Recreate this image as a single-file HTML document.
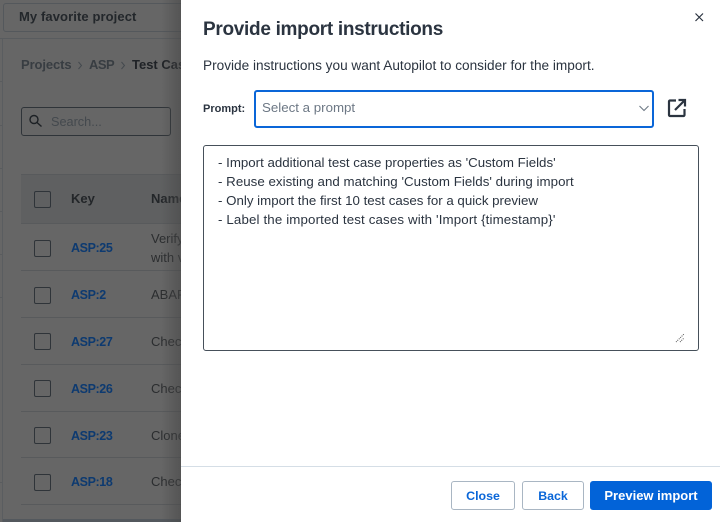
<!DOCTYPE html>
<html><head><meta charset="utf-8"><style>
html,body{margin:0;padding:0;width:720px;height:522px;overflow:hidden;background:#666;font-family:"Liberation Sans","Noto Sans CJK JP",sans-serif}
.t{position:absolute;white-space:nowrap;line-height:20px;height:20px}
.l{position:absolute;background:#585a5c;height:1px}
.s{position:absolute;left:0;width:2px;height:1px;background:#5a5c5e}
.cb{position:absolute;left:34px;width:15px;height:15px;border:1px solid #2f3439;border-radius:2px}
.k{position:absolute;left:71px;font-size:12.5px;letter-spacing:-.4px;font-weight:bold;color:#0d3a70;line-height:20px;white-space:nowrap}
.n{position:absolute;left:151px;font-size:13px;color:#2b2d2f;line-height:20px;white-space:nowrap}
#bg{position:absolute;left:0;top:0;width:181px;height:522px;overflow:hidden;background:#666}
#sh{position:absolute;left:161px;top:0;width:20px;height:522px;background:linear-gradient(to right,rgba(70,70,70,0),rgba(70,70,70,.55))}
#p{position:absolute;left:181px;top:0;width:539px;height:522px;background:#fff}
.btn{position:absolute;top:481px;height:29px;box-sizing:border-box;border-radius:3px;font-size:12.4px;font-weight:bold;text-align:center;line-height:29px}
.li{position:absolute;left:37px;white-space:nowrap;font-size:13.3px;color:#2b3440;line-height:19px}
</style></head><body>
<div id="bg">
<div style="position:absolute;left:3px;top:3px;width:190px;height:27px;border:1px solid #54585c;border-radius:3px"></div>
<div class="t" style="left:19px;top:7px;font-size:13px;font-weight:bold;color:#23272b;letter-spacing:.1px">My favorite project</div>
<div style="position:absolute;left:0;top:38px;width:181px;height:1px;background:#595c5f"></div>
<div style="position:absolute;left:2px;top:39px;width:1px;height:483px;background:#5a5d60"></div>
<div class="s" style="top:81px"></div><div class="s" style="top:125px"></div><div class="s" style="top:168px"></div><div class="s" style="top:211px"></div><div class="s" style="top:254px"></div><div class="s" style="top:297px"></div><div class="s" style="top:482px"></div>
<div class="t" style="left:21px;top:55px;font-size:13px;font-weight:bold;color:#383d42;letter-spacing:-.1px">Projects</div>
<svg style="position:absolute;left:77px;top:61px" width="6" height="9" viewBox="0 0 6 9" fill="none" stroke="#44494e" stroke-width="1"><path d="M1.500 1L4.500 4.500L1.500 8"/></svg>
<div class="t" style="left:89px;top:55px;font-size:13px;font-weight:bold;color:#383d42;letter-spacing:-.5px">ASP</div>
<svg style="position:absolute;left:120px;top:61px" width="6" height="9" viewBox="0 0 6 9" fill="none" stroke="#44494e" stroke-width="1"><path d="M1.500 1L4.500 4.500L1.500 8"/></svg>
<div class="t" style="left:132px;top:55px;font-size:13px;font-weight:bold;color:#1f2226">Test Cases</div>
<div style="position:absolute;left:21px;top:107px;width:148px;height:27px;border:1px solid #2f3439;border-radius:3px"></div>
<svg style="position:absolute;left:27px;top:113px" width="17" height="17" viewBox="0 0 17 17" fill="none" stroke="#1d2125" stroke-width="1.4"><circle cx="7" cy="6.500" r="4"/><path d="M10 9.500L14.500 13.500"/></svg>
<div class="t" style="left:51px;top:112px;font-size:12.700px;color:#44494e">Search...</div>
<div style="position:absolute;left:21px;top:174px;width:160px;height:50px;background:#5f6061"></div>
<div class="l" style="left:21px;top:174px;width:160px"></div>
<div class="cb" style="top:191px"></div>
<div class="k" style="top:189px;color:#232629;font-size:13px;letter-spacing:0">Key</div>
<div class="n" style="top:189px;font-weight:bold;color:#232629">Name</div>
<div class="l" style="left:21px;top:223px;width:160px"></div>
<div class="cb" style="top:240px"></div>
<div class="k" style="top:238px">ASP:25</div>
<div class="n" style="top:229px">Verify</div>
<div class="n" style="top:248px">with v</div>
<div class="l" style="left:21px;top:270px;width:160px"></div>
<div class="cb" style="top:287px"></div>
<div class="k" style="top:285px">ASP:2</div>
<div class="n" style="top:285px">ABAP</div>
<div class="l" style="left:21px;top:317px;width:160px"></div>
<div class="cb" style="top:333px"></div>
<div class="k" style="top:332px">ASP:27</div>
<div class="n" style="top:332px">Check</div>
<div class="l" style="left:21px;top:364px;width:160px"></div>
<div class="cb" style="top:380px"></div>
<div class="k" style="top:379px">ASP:26</div>
<div class="n" style="top:379px">Check</div>
<div class="l" style="left:21px;top:411px;width:160px"></div>
<div class="cb" style="top:427px"></div>
<div class="k" style="top:426px">ASP:23</div>
<div class="n" style="top:426px">Clone</div>
<div class="l" style="left:21px;top:457px;width:160px"></div>
<div class="cb" style="top:474px"></div>
<div class="k" style="top:472px">ASP:18</div>
<div class="n" style="top:472px">Check</div>
<div class="l" style="left:21px;top:504px;width:160px"></div>
<div style="position:absolute;left:3px;top:519px;width:178px;height:3px;background:#53585d"></div>
<div id="sh"></div>
</div>
<div id="p">
<div class="t" style="left:22px;top:20px;font-size:19px;letter-spacing:-.3px;font-weight:bold;color:#2b3440;line-height:20px">Provide import instructions</div>
<svg style="position:absolute;left:513px;top:12px" width="11" height="11" viewBox="0 0 11 11" fill="none" stroke="#2b3440" stroke-width="1.2"><path d="M1.500 1.500L9 9M9 1.500L1.500 9"/></svg>
<div class="t" style="left:22px;top:56px;font-size:13.640px;color:#2b3440">Provide instructions you want Autopilot to consider for the import.</div>
<div class="t" style="left:22px;top:99px;font-size:11px;font-weight:bold;color:#2b3440">Prompt:</div>
<div style="position:absolute;left:73px;top:90px;width:396px;height:34px;border:2px solid #0a66d8;border-radius:3px"></div>
<div class="t" style="left:81px;top:98px;font-size:13.300px;color:#6d7885">Select a prompt</div>
<svg style="position:absolute;left:457px;top:104px" width="12" height="9" viewBox="0 0 12 9" fill="none" stroke="#6d7885" stroke-width="1.1"><path d="M1.500 2L6 6.500L10.500 2"/></svg>
<svg style="position:absolute;left:485px;top:97px" width="22" height="22" viewBox="0 0 22 22" fill="none" stroke="#2b3440" stroke-width="2.2"><path d="M10 3.500H4a1 1 0 0 0-1 1V18a1 1 0 0 0 1 1H17.500a1 1 0 0 0 1-1V12"/><path d="M12.500 3H19V9.500M19 3L9 13"/></svg>
<div style="position:absolute;left:22px;top:145px;width:494px;height:204px;border:1px solid #46505a;border-radius:3px"></div>
<div class="li" style="top:153px">- Import additional test case properties as 'Custom Fields'</div>
<div class="li" style="top:172px;letter-spacing:.03px">- Reuse existing and matching 'Custom Fields' during import</div>
<div class="li" style="top:191px">- Only import the first 10 test cases for a quick preview</div>
<div class="li" style="top:210px;letter-spacing:.14px">- Label the imported test cases with 'Import {timestamp}'</div>
<svg style="position:absolute;left:494px;top:333px" width="10" height="10" viewBox="0 0 10 10" fill="none" stroke="#555" stroke-width="1" stroke-dasharray="1 1"><path d="M1 9L9 1M5 9L9 5"/></svg>
<div style="position:absolute;left:0;top:466px;width:539px;height:1px;background:#d5dee6"></div>
<div class="btn" style="left:270px;width:64px;border:1px solid #a9b6c3;color:#0a66d8;line-height:29px">Close</div>
<div class="btn" style="left:341px;width:62px;border:1px solid #a9b6c3;color:#0a66d8;line-height:29px">Back</div>
<div class="btn" style="left:409px;width:122px;background:#0263d8;color:#fff;font-size:13px">Preview import</div>
</div>
</body></html>
